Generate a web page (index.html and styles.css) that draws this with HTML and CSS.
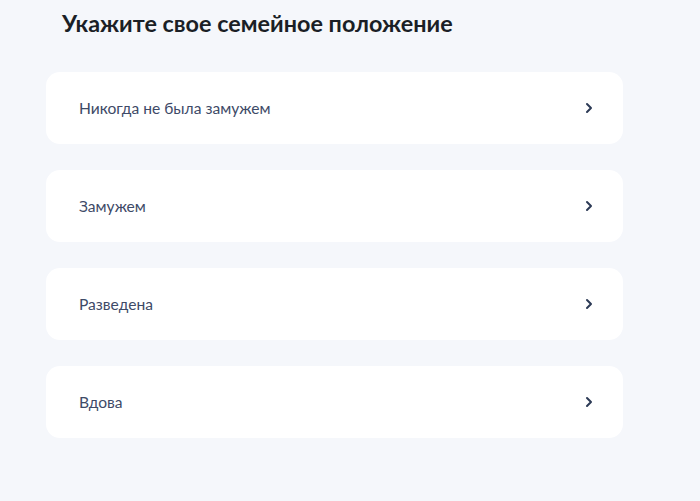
FILE: index.html
```html
<!DOCTYPE html>
<html lang="ru">
<head>
<meta charset="utf-8">
<link rel="stylesheet" href="styles.css">
</head>
<body>
<div class="page">
  <h1 class="title">Укажите свое семейное положение</h1>
  <div class="list">
    <div class="card"><span class="label">Никогда не была замужем</span><svg class="chev" width="10" height="12" viewBox="0 0 10 12"><path d="M3 2 L7 6 L3 10" fill="none" stroke="#2c3a55" stroke-width="2" stroke-linecap="round" stroke-linejoin="round"/></svg></div>
    <div class="card"><span class="label">Замужем</span><svg class="chev" width="10" height="12" viewBox="0 0 10 12"><path d="M3 2 L7 6 L3 10" fill="none" stroke="#2c3a55" stroke-width="2" stroke-linecap="round" stroke-linejoin="round"/></svg></div>
    <div class="card"><span class="label">Разведена</span><svg class="chev" width="10" height="12" viewBox="0 0 10 12"><path d="M3 2 L7 6 L3 10" fill="none" stroke="#2c3a55" stroke-width="2" stroke-linecap="round" stroke-linejoin="round"/></svg></div>
    <div class="card"><span class="label">Вдова</span><svg class="chev" width="10" height="12" viewBox="0 0 10 12"><path d="M3 2 L7 6 L3 10" fill="none" stroke="#2c3a55" stroke-width="2" stroke-linecap="round" stroke-linejoin="round"/></svg></div>
  </div>
</div>
</body>
</html>
```
FILE: styles.css
```css
html, body {
  margin: 0;
  padding: 0;
  background: #f5f7fb;
}
body {
  font-family: Lato, "Noto Sans", sans-serif;
  width: 700px;
  height: 501px;
  overflow: hidden;
}
.page {
  padding: 9px 0 0 46px;
  width: 577px;
}
.title {
  margin: 0 0 0 16px;
  font-size: 23.4px;
  font-weight: 700;
  color: #1b1f26;
  line-height: 28px;
}
.list {
  margin-top: 35px;
  display: flex;
  flex-direction: column;
  gap: 26px;
}
.card {
  height: 72px;
  background: #ffffff;
  border-radius: 14px;
  display: flex;
  align-items: center;
  justify-content: space-between;
  padding: 0 29px 0 33px;
}
.label {
  font-size: 15.6px;
  color: #3e4a67;
}
.chev {
  display: block;
}
```
